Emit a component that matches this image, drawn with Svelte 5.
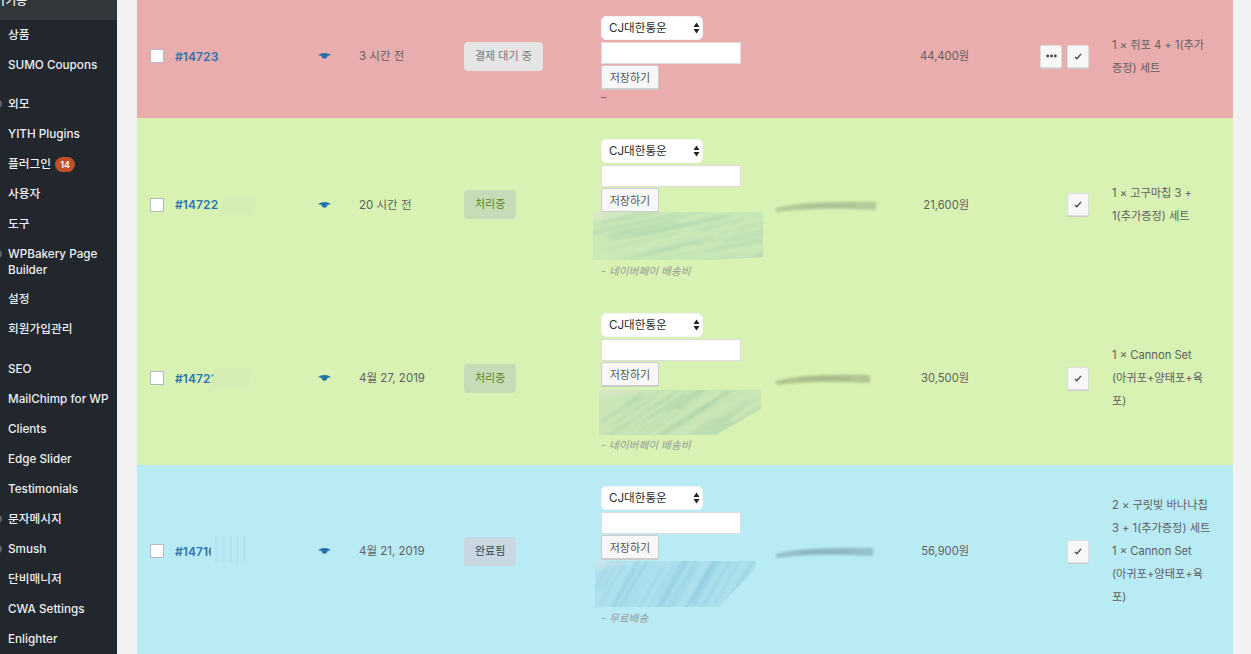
<script>
  const menu = [
    { t: '상품' }, { t: 'SUMO Coupons' },
    { t: '외모', gap: 1, ico: 1 }, { t: 'YITH Plugins' }, { t: '플러그인', badge: '14' }, { t: '사용자' }, { t: '도구' },
    { t: 'WPBakery Page Builder', ico: 1, tall: 1 }, { t: '설정' }, { t: '회원가입관리' },
    { t: 'SEO', gap: 2 }, { t: 'MailChimp for WP' }, { t: 'Clients' }, { t: 'Edge Slider' }, { t: 'Testimonials' },
    { t: '문자메시지', ico: 1 }, { t: 'Smush', ico: 1 }, { t: '단비매니저' }, { t: 'CWA Settings' }, { t: 'Enlighter' }
  ];

  const orders = [
    { id: '#14723', tone: 'pink', date: '3 시간 전', status: '결제 대기 중', st: 'pending', total: '44,400원', more: true, note: '–', plain: true, noteTop: 1,
      lines: ['1 × 쥐포 4 + 1(추가', '증정) 세트'] },
    { id: '#14722', tone: 'green a', date: '20 시간 전', status: '처리중', st: 'processing', total: '21,600원', note: '- 네이버페이 배송비', noteTop: 2,
      patch: { w: 172, h: 50, x: -9, top: -1, slope: 5, pts: '1,1 171,1 171,46 120,49 1,49', base: '#cbe8b7', dark: '#b2d8b0', light: '#dde8cd' },
      smear: { w: 101, c: '#8fa882' }, lines: ['1 × 고구마칩 3 +', '1(추가증정) 세트'], idw: 34, idx: 46, idtop: 0, idh: 18 },
    { id: '#14721', tone: 'green b', date: '4월 27, 2019', status: '처리중', st: 'processing', total: '30,500원', note: '- 네이버페이 배송비', noteTop: 1,
      patch: { w: 164, h: 47, x: -3, top: 3, slope: 22, pts: '1,1 163,1 163,20 118,46 1,46', base: '#cae6b6', dark: '#aed4aa', light: '#dde5ce' },
      smear: { w: 95, c: '#909c6f' }, lines: ['1 × Cannon Set', '(아귀포+양태포+육', '포)'], idw: 36, idx: 38, idtop: -3, idh: 20 },
    { id: '#14716', tone: 'blue', date: '4월 21, 2019', status: '완료됨', st: 'completed', total: '56,900원', note: '- 무료배송', noteTop: 2,
      patch: { w: 163, h: 48, x: -7, top: 1, slope: 48, pts: '1,1 162,1 162,8 125,47 1,47', base: '#aee0ed', dark: '#8ccadf', light: '#d3e6ec' },
      smear: { w: 98, c: '#6f97a3' }, lines: ['2 × 구릿빛 바나나칩', '3 + 1(추가증정) 세트', '1 × Cannon Set', '(아귀포+양태포+육', '포)'], idw: 39, idx: 36, idtop: -8, idh: 27, stripe: true }
  ];

  function streaks(p) {
    const out = [];
    let seed = p.w * 7 + p.h * 13 + p.slope;
    const rnd = () => (seed = (seed * 9301 + 49297) % 233280) / 233280;
    for (let i = 0; i < 40; i++) {
      const x = rnd() * (p.w + p.slope) - p.slope * 0.2;
      const y = rnd() * p.h;
      const len = 40 + rnd() * 60;
      const k = p.slope / 50;
      const dy = len * (0.12 + k * 0.9);
      out.push({ x1: x, y1: y + dy / 2, x2: x + len * (1 - k * 0.45), y2: y - dy / 2, w: 0.8 + rnd() * 3, o: 0.3 + rnd() * 0.45 });
    }
    return out;
  }
</script>

<div class="page">
  <aside class="menu">
    <div class="head"><span>추가기능</span></div>
    {#each menu as m}
      <div class="item" class:gap1={m.gap === 1} class:gap2={m.gap === 2} class:tall={m.tall}>
        {#if m.ico}<i class="stub"></i>{/if}
        <span>{m.t}</span>
        {#if m.badge}<b class="badge">{m.badge}</b>{/if}
      </div>
    {/each}
  </aside>

  <main class="list">
    {#each orders as o, n}
      <section class="row {o.tone}" class:first={n === 0}>
        <div class="check"><input type="checkbox" /></div>
        <div class="id">
          <a href="#{o.id}">{o.id}</a>
          {#if o.idw}
            <span class="veil" class:stripe={o.stripe} style="left:{o.idx}px;width:{o.idw}px;top:{o.idtop}px;height:{o.idh}px"></span>
          {/if}
        </div>
        <div class="eye">
          <svg width="13" height="8" viewBox="0 0 13 8" aria-hidden="true">
            <path d="M0 3Q3 1 6.500 1T13 3Q11 4 9.600 3.800Q9 6.800 6.500 6.800T3.400 3.800Q2 4 0 3Z" fill="#2271a8"/>
          </svg>
        </div>
        <div class="date">{o.date}</div>
        <div class="status"><span class="pill {o.st}">{o.status}</span></div>
        <div class="track">
          <div class="sel">
            <select><option>CJ대한통운</option></select>
            <svg class="arrows" width="7" height="12" viewBox="0 0 7 12" aria-hidden="true">
              <path d="M3.500 0.500 6.500 5H.5ZM.5 7h6l-3 4.500Z" fill="#222"/>
            </svg>
          </div>
          <input class="code" type="text" />
          <button class="save">저장하기</button>
          {#if o.patch}
            <svg class="patch" style="margin-left:{o.patch.x}px;margin-top:{o.patch.top}px" width={o.patch.w} height={o.patch.h} viewBox="0 0 {o.patch.w} {o.patch.h}" aria-hidden="true">
              <defs>
                <filter id="edge{n}" x="-5%" y="-10%" width="110%" height="120%"><feGaussianBlur stdDeviation=".7" /></filter>
                <filter id="soft{n}" x="-10%" y="-10%" width="120%" height="120%"><feGaussianBlur stdDeviation="1.800" /></filter>
                <clipPath id="cut{n}"><polygon points={o.patch.pts} /></clipPath>
                <linearGradient id="wash{n}" x1="0" y1="0" x2="0.4" y2="0.6">
                  <stop offset="0" stop-color={o.patch.light} />
                  <stop offset="0.35" stop-color={o.patch.base} />
                  <stop offset="1" stop-color={o.patch.base} />
                </linearGradient>
              </defs>
              <g filter="url(#edge{n})">
                <g clip-path="url(#cut{n})">
                  <rect width={o.patch.w} height={o.patch.h} fill="url(#wash{n})" />
                  <g filter="url(#soft{n})">
                    {#each streaks(o.patch) as s}
                      <line x1={s.x1} y1={s.y1} x2={s.x2} y2={s.y2} stroke={o.patch.dark} stroke-width={s.w} stroke-opacity={s.o} stroke-linecap="round" />
                    {/each}
                  </g>
                </g>
              </g>
            </svg>
          {/if}
          <div class="note" class:plain={o.plain} style="margin-top:{o.noteTop}px">{o.note}</div>
        </div>
        <div class="name">
          {#if o.smear}
            <svg class="smudge" width={o.smear.w + 4} height="24" viewBox="0 0 {o.smear.w + 4} 24" aria-hidden="true">
              <defs><filter id="sm{n}" x="-5%" y="-80%" width="110%" height="260%"><feGaussianBlur stdDeviation="1.300" /></filter></defs>
              <g filter="url(#sm{n})" fill={o.smear.c}>
                <path d="M1 14Q{o.smear.w * 0.3} 6 {o.smear.w} 8V16Q{o.smear.w * 0.4} 13 1 18Z" fill-opacity=".5" />
                <path d="M{o.smear.w * 0.25} 12Q{o.smear.w * 0.5} 9 {o.smear.w * 0.8} 11V13Q{o.smear.w * 0.5} 12 {o.smear.w * 0.25} 14Z" fill-opacity=".35" />
              </g>
            </svg>
          {/if}
        </div>
        <div class="total">{o.total}</div>
        <div class="actions">
          {#if o.more}
            <button class="act" aria-label="more">
              <svg width="11" height="4" viewBox="0 0 11 4" aria-hidden="true"><circle cx="1.700" cy="2" r="1.400" fill="#444"/><circle cx="5.500" cy="2" r="1.400" fill="#444"/><circle cx="9.300" cy="2" r="1.400" fill="#444"/></svg>
            </button>
          {/if}
          <button class="act" aria-label="complete">
            <svg width="8" height="7" viewBox="0 0 9 8" aria-hidden="true"><path d="M1 4.400 3.200 6.600 8 1" fill="none" stroke="#444" stroke-width="1.500"/></svg>
          </button>
        </div>
        <div class="goods">
          {#each o.lines as l}<div>{l}</div>{/each}
        </div>
      </section>
    {/each}
    <div class="rest"></div>
  </main>
</div>

<style>
  :global(body) { margin: 0; background: #f1f1f1; }
  .page {
    display: flex;
    height: 654px;
    overflow: hidden;
    font-family: Inter, "Noto Sans CJK KR", sans-serif;
    background: #f1f1f1;
  }

  .menu {
    width: 117px;
    flex: none;
    background: #22262d;
    color: #eef0f1;
    font-size: 11.7px;
    font-weight: 500;
    line-height: 16px;
    overflow: hidden;
  }
  .head {
    height: 31px;
    margin-top: -11px;
    box-sizing: border-box;
    padding-top: 4px;
    background: #32373c;
    white-space: nowrap;
  }
  .head span { display: block; margin-left: -16px; }
  .item {
    position: relative;
    padding: 7px 0 7px 8px;
    white-space: nowrap;
  }
  .item.tall { white-space: normal; padding-bottom: 6px; padding-right: 4px; }
  .gap1 { margin-top: 9px; }
  .gap2 { margin-top: 10px; }
  .stub {
    position: absolute;
    left: -6px;
    top: 11px;
    width: 8px;
    height: 8px;
    border-radius: 50%;
    background: #5f646a;
  }
  .badge {
    display: inline-block;
    margin-left: 1px;
    padding: 0 5px;
    height: 15px;
    line-height: 15px;
    border-radius: 8px;
    background: #c34e28;
    color: #fff;
    font-size: 9px;
    font-weight: 600;
  }

  .list {
    flex: none;
    width: 1096px;
    margin-left: 20px;
    margin-top: -6px;
  }
  .row {
    display: grid;
    grid-template-columns: 38px 142px 42px 105px 137px 174px 110px 84px 120px 144px;
    height: 173px;
    box-sizing: border-box;
    align-items: center;
    font-size: 12px;
    color: #5f5f5f;
  }
  .row.first { height: 124px; }
  .pink { background: #e9adad; }
  .green { background: #d7f2b2; }
  .green.b { height: 174px; }
  .blue { background: #b9ebf5; height: 172px; }
  .rest { height: 60px; background: #b9ebf5; }

  .check { padding-left: 13px; display: flex; }
  .check input {
    appearance: none;
    width: 14px;
    height: 14px;
    margin: 0;
    background: #fff;
    border: 1px solid #b4b9be;
    box-sizing: border-box;
  }
  .id { position: relative; }
  .id a {
    color: #2a74b0;
    font-weight: 600;
    font-size: 12px;
    text-decoration: none;
    letter-spacing: 0.1px;
  }
  .veil {
    position: absolute;
    background: #d7f2b2;
    transform: skewX(-14deg);
  }
  .green .veil::after {
    content: '';
    display: block;
    height: 100%;
    background: #d3edb3;
    filter: blur(1.5px);
  }
  .veil.stripe {
    background: repeating-linear-gradient(90deg, #b9ebf5 0 4px, #b2e5f0 4px 7px);
    transform: none;
  }
  .eye { display: flex; padding-left: 1px; }
  .date { white-space: nowrap; font-size: 11.5px; margin-bottom: 2px; }

  .pill {
    display: inline-block;
    height: 29px;
    line-height: 29px;
    padding: 0 11px;
    border-radius: 4px;
    font-size: 11px;
    white-space: nowrap;
  }
  .pending { background: #e5e5e5; color: #777; }
  .processing { background: #c6dcb8; color: #5b841b; }
  .completed { background: #c8d7e1; color: #2e4453; }

  .track {
    align-self: start;
    padding-top: 21px;
    display: flex;
    flex-direction: column;
    align-items: flex-start;
  }
  .first .track, .green.b .track { padding-top: 22px; }
  .sel { position: relative; width: 102px; height: 24px; }
  .sel select {
    appearance: none;
    display: block;
    width: 100%;
    height: 24px;
    box-sizing: border-box;
    padding: 0 0 0 7px;
    border: 1px solid #f4f4f4;
    border-radius: 5px;
    background: #fff;
    color: #2b2b2b;
    font: 11.6px Inter, "Noto Sans CJK KR", sans-serif;
  }
  .arrows { position: absolute; right: 3px; top: 6px; pointer-events: none; }
  .code {
    display: block;
    width: 140px;
    height: 22px;
    margin: 2px 0 1px;
    box-sizing: border-box;
    border: 1px solid #ddd;
    background: #fff;
    padding: 0;
  }
  .save {
    width: 58px;
    height: 24px;
    padding: 0;
    border: 1px solid #ccc;
    border-radius: 2px;
    background: #f7f7f7;
    box-shadow: 0 1px 0 #ccc;
    color: #555;
    font: 11px Inter, "Noto Sans CJK KR", sans-serif;
  }
  .patch { display: block; }
  .note {
    height: 18px;
    line-height: 18px;
    font-size: 10.7px;
    font-style: italic;
    color: #999;
    white-space: nowrap;
  }
  .note.plain { font-style: normal; color: #666; line-height: 16px; }

  .name { display: flex; margin-top: 2px; }
  .total { text-align: right; font-size: 11.2px; white-space: nowrap; justify-self: end; width: 84px; margin-bottom: 2px; }
  .actions { display: flex; justify-content: flex-end; gap: 5px; }
  .act {
    width: 22px;
    height: 23px;
    padding: 0;
    border: 1px solid #ddd;
    border-radius: 2px;
    background: #f7f7f7;
    box-shadow: 0 1px 0 #ccc;
    display: flex;
    align-items: center;
    justify-content: center;
  }
  .goods {
    padding: 1px 0 0 23px;
    font-size: 11.2px;
    line-height: 23px;
    color: #606060;
    white-space: nowrap;
  }
</style>
